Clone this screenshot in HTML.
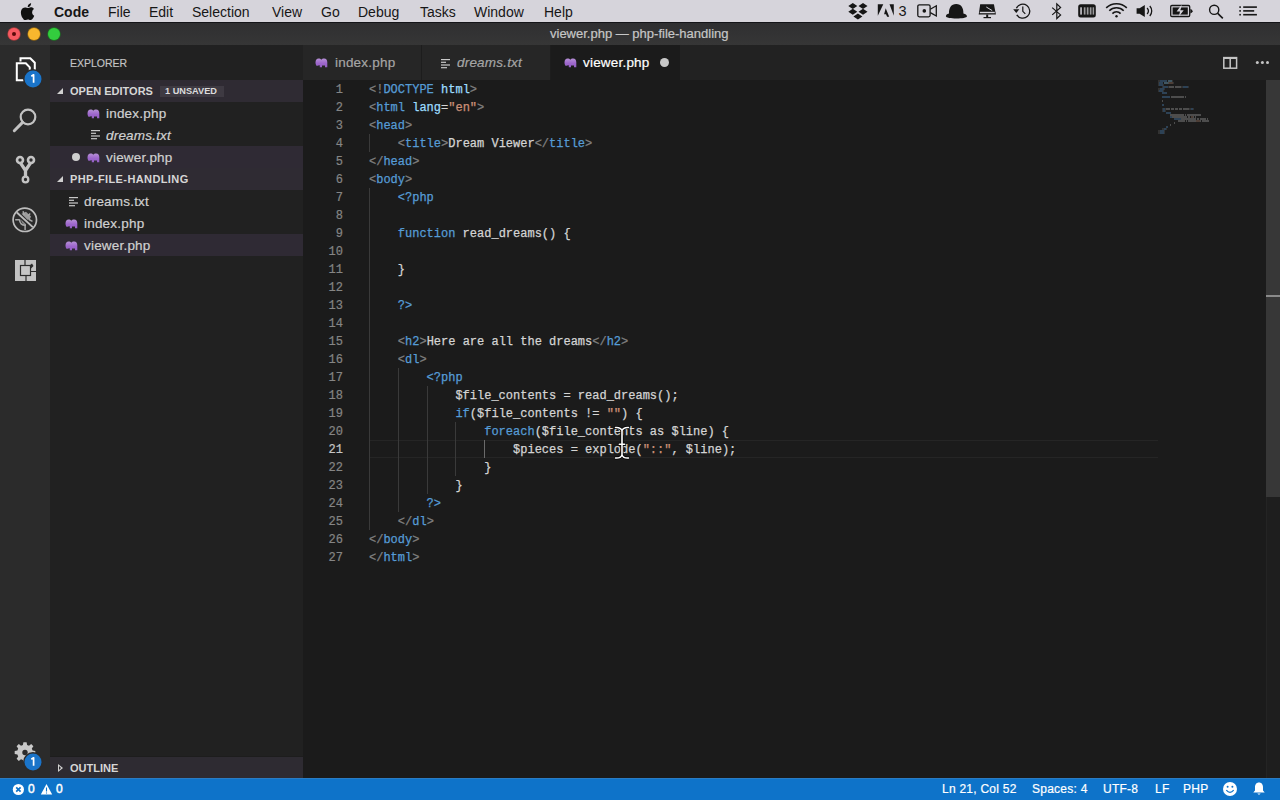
<!DOCTYPE html>
<html><head><meta charset="utf-8">
<style>
*{margin:0;padding:0;box-sizing:border-box}
html,body{width:1280px;height:800px;overflow:hidden;background:#1b1b1b;font-family:"Liberation Sans",sans-serif;position:relative}
.abs{position:absolute}
#menubar{left:0;top:0;width:1280px;height:23px;background:#d6d4db;border-bottom:1px solid #141418}
.m{position:absolute;top:4px;font-size:14px;line-height:16px;color:#161616;white-space:nowrap}
#titlebar{left:0;top:23px;width:1280px;height:22px;background:linear-gradient(#2f2f31,#363636)}
#titlebar .t{-webkit-text-stroke:0.2px;position:absolute;left:550px;top:3px;font-size:13px;line-height:15px;color:#c6c6c6;white-space:nowrap}
.light{position:absolute;top:28px;width:12px;height:12px;border-radius:50%}
#activity{left:0;top:45px;width:50px;height:733px;background:#2b2b2b}
#sidebar{left:50px;top:45px;width:253px;height:733px;background:#212121}
.sbt{-webkit-text-stroke:0.15px;position:absolute;white-space:nowrap;color:#cccccc}
.hdr{position:absolute;left:50px;width:253px;height:22px;background:#2f2b33}
.hdr .tw{position:absolute;left:7px;top:8px;width:0;height:0;border-left:6px solid transparent;border-bottom:6px solid #d0d0d0}
.hdr .tx{position:absolute;left:20px;top:5px;font-size:11px;line-height:13px;font-weight:bold;color:#d6d6d6;white-space:nowrap}
.row{position:absolute;left:50px;width:253px;height:22px}
.row .tx{-webkit-text-stroke:0.2px;position:absolute;top:4px;font-size:13.5px;line-height:15px;letter-spacing:0.2px;color:#d0d0d0;white-space:nowrap}
.sel{background:#2f2a34}
#tabs{left:303px;top:45px;width:977px;height:35px;background:#222222}
.tab{position:absolute;top:45px;height:35px;background:#262626;border-right:1px solid #1d1d1d}
.tab .tx{-webkit-text-stroke:0.2px;position:absolute;top:10px;font-size:13.5px;line-height:15px;letter-spacing:0.2px;color:#a5a5a5;white-space:nowrap}
#editor{left:303px;top:80px;width:977px;height:698px;background:#1b1b1b}
#status{left:0;top:778px;width:1280px;height:22px;background:#0e73c9;border-top:1px solid #2a7cc4}
.st{-webkit-text-stroke:0.2px;position:absolute;top:782px;font-size:12px;line-height:14px;letter-spacing:0.25px;color:#ffffff;white-space:nowrap}
.cl{position:absolute;left:369px;margin-top:1px;-webkit-text-stroke:0.25px;font-family:"Liberation Mono",monospace;font-size:12px;line-height:18px;height:18px;white-space:pre;color:#d4d4d4}
.nm{-webkit-text-stroke:0.2px;position:absolute;left:303px;margin-top:1px;width:40px;font-family:"Liberation Mono",monospace;font-size:12px;line-height:18px;white-space:pre;color:#858585;text-align:right}
.nm.cur{color:#c6c6c6}
.g{color:#808080}.b{color:#569cd6}.lb{color:#9cdcfe}.s{color:#ce9178}
.ig{position:absolute;width:1px;background:#3a3a3a}
.ig.act{background:#6a6a6a}
#curline{left:369px;top:440px;width:789px;height:18px;border-top:1px solid #252525;border-bottom:1px solid #252525}
#scroll{left:1266px;top:80px;width:14px;height:698px;background:#1e1e1e;border-left:1px solid #242424}
#slider{left:1266px;top:80px;width:14px;height:417px;background:#373737}
</style></head>
<body>
<div id="menubar" class="abs">
  <svg class="abs" style="left:20px;top:3px" width="15" height="17" viewBox="0 0 15 17"><path fill="#111" d="M12.2 9.1c0-2.1 1.7-3.1 1.8-3.2-1-1.4-2.5-1.6-3-1.6-1.3-.1-2.5.8-3.2.8-.7 0-1.7-.8-2.8-.7C3.6 4.400 2.3 5.2 1.600 6.500c-1.500 2.600-.4 6.400 1 8.500.7 1 1.500 2.200 2.600 2.100 1-.0 1.500-.7 2.700-.7 1.200 0 1.600.7 2.700.6 1.100 0 1.800-1 2.500-2 .8-1.100 1.100-2.200 1.100-2.300 0 0-2.100-.8-2.100-3.200zM10.200 3c.6-.7 1-1.700.9-2.700-.8 0-1.900.6-2.500 1.300-.5.600-1 1.600-.9 2.600.9.100 1.900-.5 2.500-1.200z"/></svg>
  <div class="m" style="left:54px;font-weight:bold">Code</div>
  <div class="m" style="left:108px">File</div>
  <div class="m" style="left:149px">Edit</div>
  <div class="m" style="left:192px">Selection</div>
  <div class="m" style="left:272px">View</div>
  <div class="m" style="left:321px">Go</div>
  <div class="m" style="left:358px">Debug</div>
  <div class="m" style="left:420px">Tasks</div>
  <div class="m" style="left:474px">Window</div>
  <div class="m" style="left:544px">Help</div>
  <svg style="position:absolute;left:0;top:0" width="1280" height="22" viewBox="0 0 1280 22">
 <g fill="#161616">
  <!-- dropbox -->
  <path d="M852.800 2.900L857.300 5.900L852.800 8.900L848.300 5.900Z M863 2.900L867.500 5.900L863 8.900L858.500 5.900Z M852.800 8.700L857.300 11.700L852.800 14.700L848.300 11.700Z M863 8.700L867.500 11.700L863 14.700L858.500 11.700Z M857.900 13.400L862.400 16.400L857.900 19.400L853.400 16.400Z"/>
  <!-- adobe -->
  <path d="M877.800 4.300H883.300L877.800 15.800Z M889.500 4.300H893.800V15.800Z M885.700 8.200L889.200 16.800H887.100L886 14.200H884.100Z"/>
  <text x="898.500" y="16.200" font-family="Liberation Sans" font-size="14.500">3</text>
  <!-- camera -->
  <rect x="917.800" y="4.800" width="12.300" height="12" rx="1.500" fill="none" stroke="#161616" stroke-width="1.300"/>
  <circle cx="924.300" cy="10.900" r="1.800"/>
  <path d="M930.300 9.200L936.300 5.800V16L930.300 12.600" fill="none" stroke="#161616" stroke-width="1.300"/>
  <!-- hat -->
  <path d="M949 13.500C948.800 8 951 3.900 956.200 3.900C961.400 3.900 963.600 8 963.400 13.500C965.500 14 967 15 967 16.300C967 17.800 962 18.500 956.500 18.500C951 18.500 945.900 17.800 945.900 16.300C945.900 15 947 14 949 13.500Z"/>
  <!-- display -->
  <path d="M980.200 4.300H993.900L995.900 14.500H978.700Z"/>
  <rect x="979.800" y="11.800" width="15" height="1.400" fill="#d6d4db"/>
  <path d="M986.300 7L992.200 10.600" stroke="#d6d4db" stroke-width="1"/>
  <rect x="986.200" y="14.500" width="2" height="3"/>
  <rect x="983.500" y="17" width="7.500" height="1.200"/>
  <!-- time machine -->
  <path d="M1016.400 8.300A7 7 0 1 1 1016.800 14.800" fill="none" stroke="#161616" stroke-width="1.300"/>
  <path d="M1013.200 9.200L1016.300 13L1019.300 9.200Z"/>
  <path d="M1022.800 6.600V11.300L1025.300 13.800" fill="none" stroke="#161616" stroke-width="1.200"/>
  <!-- bluetooth -->
  <path d="M1052.200 7.600L1060.600 14.900L1056.800 18.500V3.900L1060.600 7.500L1052.200 14.900" fill="none" stroke="#161616" stroke-width="1.200"/>
  <!-- memory -->
  <rect x="1078.200" y="4.300" width="17.600" height="13.300" rx="2.500"/>
  <rect x="1080.300" y="7.300" width="1.500" height="7.300" fill="#d6d4db"/>
  <rect x="1083.800" y="7.300" width="1.700" height="7.300" fill="#9a9a9c"/>
  <rect x="1086.800" y="7.300" width="1.700" height="7.300" fill="#9a9a9c"/>
  <rect x="1089.800" y="7.300" width="1.700" height="7.300" fill="#9a9a9c"/>
  <rect x="1092.600" y="7.300" width="1.500" height="7.300" fill="#9a9a9c"/>
  <!-- wifi -->
  <path d="M1106.200 7.800A15 15 0 0 1 1126.800 7.800 M1109.300 10.800A10 10 0 0 1 1123.700 10.800 M1112.400 13.600A5.500 5.500 0 0 1 1120.600 13.600" fill="none" stroke="#161616" stroke-width="1.600"/>
  <circle cx="1116.500" cy="16.300" r="1.200"/>
  <!-- volume -->
  <path d="M1136.600 8.200H1139.600L1144.800 5V17L1139.600 13.800H1136.600Z"/>
  <path d="M1147.100 8A4.500 4.500 0 0 1 1147.100 14 M1149.800 6A7.500 7.500 0 0 1 1149.800 16" fill="none" stroke="#161616" stroke-width="1.300"/>
  <!-- battery -->
  <rect x="1170.700" y="5.500" width="19" height="11" rx="1.200" fill="none" stroke="#161616" stroke-width="1.300"/>
  <rect x="1172.600" y="7.400" width="15.200" height="7.200"/>
  <path d="M1190.300 9V13.400Q1192.600 12.800 1192.600 11.200Q1192.600 9.600 1190.300 9Z"/>
  <path d="M1181 5.600L1176.600 11.600H1180L1178.900 16.600L1183.700 10.300H1180.300L1181.800 5.600Z" fill="#d6d4db"/>
  <!-- search -->
  <circle cx="1214.200" cy="9.800" r="4.600" fill="none" stroke="#161616" stroke-width="1.400"/>
  <path d="M1217.500 13.200L1222.800 18.300" stroke="#161616" stroke-width="1.600"/>
  <!-- list -->
  <rect x="1239.300" y="6.300" width="1.600" height="1.600"/><rect x="1239.300" y="10.100" width="1.600" height="1.600"/><rect x="1239.300" y="13.900" width="1.600" height="1.600"/>
  <rect x="1243.200" y="6.300" width="13.700" height="1.600"/><rect x="1243.200" y="10.100" width="11" height="1.600"/><rect x="1243.200" y="13.900" width="13.700" height="1.600"/>
 </g>
</svg>

</div>
<div id="titlebar" class="abs"><div class="t">viewer.php — php-file-handling</div></div>
<div class="light" style="left:8px;background:#f65a61;box-shadow:0 0 0 0.7px #a83c3c"><div style="position:absolute;left:4px;top:4px;width:4px;height:4px;border-radius:50%;background:#5a0a0a"></div></div>
<div class="light" style="left:28px;background:#f8b72e;box-shadow:0 0 0 0.7px #9a6a10"></div>
<div class="light" style="left:48px;background:#33cc3e;box-shadow:0 0 0 0.7px #1a7a20"></div>

<div id="activity" class="abs"></div>
<div id="sidebar" class="abs"></div>
<div class="sbt" style="left:70px;top:57px;font-size:10.5px;line-height:12px;color:#c4c4c4">EXPLORER</div>
<div class="hdr" style="top:80px"><div class="tw"></div><div class="tx">OPEN EDITORS</div>
  <div style="position:absolute;left:110px;top:6px;width:64px;height:11px;background:#3e3a42"></div>
  <div style="position:absolute;left:115px;top:6px;font-size:9.2px;line-height:11px;font-weight:bold;color:#dcdcdc;white-space:nowrap">1 UNSAVED</div>
</div>
<div class="row" style="top:102px"><div class="tx" style="left:56px">index.php</div></div>
<div class="row" style="top:124px"><div class="tx" style="left:56px;font-style:italic">dreams.txt</div></div>
<div class="row sel" style="top:146px"><div style="position:absolute;left:22px;top:7px;width:8px;height:8px;border-radius:50%;background:#cfcfcf"></div><div class="tx" style="left:56px">viewer.php</div></div>
<div class="hdr" style="top:168px"><div class="tw"></div><div class="tx" style="letter-spacing:0.4px">PHP-FILE-HANDLING</div></div>
<div class="row" style="top:190px"><div class="tx" style="left:34px">dreams.txt</div></div>
<div class="row" style="top:212px"><div class="tx" style="left:34px">index.php</div></div>
<div class="row sel" style="top:234px"><div class="tx" style="left:34px">viewer.php</div></div>
<div class="hdr" style="top:756px;background:#2e2b32;border-top:1px solid #1d1d1d"><div style="position:absolute;left:8px;top:7px;width:0;height:0;border-top:4px solid transparent;border-bottom:4px solid transparent;border-left:5px solid #d0d0d0"></div><div style="position:absolute;left:9px;top:9px;width:0;height:0;border-top:2px solid transparent;border-bottom:2px solid transparent;border-left:2.5px solid #2e2b32"></div><div class="tx">OUTLINE</div></div>

<div id="tabs" class="abs"></div>
<div class="tab" style="left:303px;width:119px"><div class="tx" style="left:32px">index.php</div></div>
<div class="tab" style="left:422px;width:129px"><div class="tx" style="left:35px;font-style:italic">dreams.txt</div></div>
<div class="tab" style="left:551px;width:129px;background:#1b1b1b;border-right:none"><div class="tx" style="left:32px;color:#ffffff">viewer.php</div>
  <div style="position:absolute;left:109px;top:13px;width:9px;height:9px;border-radius:50%;background:#c8c8c8"></div></div>

<div id="editor" class="abs"></div>
<div id="curline" class="abs"></div>
<div class="nm" style="top:80px">1</div>
<div class="nm" style="top:98px">2</div>
<div class="nm" style="top:116px">3</div>
<div class="nm" style="top:134px">4</div>
<div class="nm" style="top:152px">5</div>
<div class="nm" style="top:170px">6</div>
<div class="nm" style="top:188px">7</div>
<div class="nm" style="top:206px">8</div>
<div class="nm" style="top:224px">9</div>
<div class="nm" style="top:242px">10</div>
<div class="nm" style="top:260px">11</div>
<div class="nm" style="top:278px">12</div>
<div class="nm" style="top:296px">13</div>
<div class="nm" style="top:314px">14</div>
<div class="nm" style="top:332px">15</div>
<div class="nm" style="top:350px">16</div>
<div class="nm" style="top:368px">17</div>
<div class="nm" style="top:386px">18</div>
<div class="nm" style="top:404px">19</div>
<div class="nm" style="top:422px">20</div>
<div class="nm cur" style="top:440px">21</div>
<div class="nm" style="top:458px">22</div>
<div class="nm" style="top:476px">23</div>
<div class="nm" style="top:494px">24</div>
<div class="nm" style="top:512px">25</div>
<div class="nm" style="top:530px">26</div>
<div class="nm" style="top:548px">27</div>
<div class="ig" style="left:369.0px;top:134px;height:18px"></div>
<div class="ig" style="left:369.0px;top:188px;height:342px"></div>
<div class="ig" style="left:397.8px;top:368px;height:144px"></div>
<div class="ig" style="left:426.6px;top:386px;height:108px"></div>
<div class="ig" style="left:455.4px;top:422px;height:54px"></div>
<div class="ig act" style="left:484.2px;top:440px;height:18px"></div>
<div class="cl" style="top:80px"><span class="g">&lt;!</span><span class="b">DOCTYPE</span> <span class="lb">html</span><span class="g">&gt;</span></div>
<div class="cl" style="top:98px"><span class="g">&lt;</span><span class="b">html</span> <span class="lb">lang</span>=<span class="s">&quot;en&quot;</span><span class="g">&gt;</span></div>
<div class="cl" style="top:116px"><span class="g">&lt;</span><span class="b">head</span><span class="g">&gt;</span></div>
<div class="cl" style="top:134px">    <span class="g">&lt;</span><span class="b">title</span><span class="g">&gt;</span>Dream Viewer<span class="g">&lt;/</span><span class="b">title</span><span class="g">&gt;</span></div>
<div class="cl" style="top:152px"><span class="g">&lt;/</span><span class="b">head</span><span class="g">&gt;</span></div>
<div class="cl" style="top:170px"><span class="g">&lt;</span><span class="b">body</span><span class="g">&gt;</span></div>
<div class="cl" style="top:188px">    <span class="b">&lt;?php</span></div>
<div class="cl" style="top:206px"></div>
<div class="cl" style="top:224px">    <span class="b">function</span> read_dreams() {</div>
<div class="cl" style="top:242px"></div>
<div class="cl" style="top:260px">    }</div>
<div class="cl" style="top:278px"></div>
<div class="cl" style="top:296px">    <span class="b">?&gt;</span></div>
<div class="cl" style="top:314px"></div>
<div class="cl" style="top:332px">    <span class="g">&lt;</span><span class="b">h2</span><span class="g">&gt;</span>Here are all the dreams<span class="g">&lt;/</span><span class="b">h2</span><span class="g">&gt;</span></div>
<div class="cl" style="top:350px">    <span class="g">&lt;</span><span class="b">dl</span><span class="g">&gt;</span></div>
<div class="cl" style="top:368px">        <span class="b">&lt;?php</span></div>
<div class="cl" style="top:386px">            $file_contents = read_dreams();</div>
<div class="cl" style="top:404px">            <span class="b">if</span>($file_contents != <span class="s">&quot;&quot;</span>) {</div>
<div class="cl" style="top:422px">                <span class="b">foreach</span>($file_contents as $line) {</div>
<div class="cl" style="top:440px">                    $pieces = explode(<span class="s">&quot;::&quot;</span>, $line);</div>
<div class="cl" style="top:458px">                }</div>
<div class="cl" style="top:476px">            }</div>
<div class="cl" style="top:494px">        <span class="b">?&gt;</span></div>
<div class="cl" style="top:512px">    <span class="g">&lt;/</span><span class="b">dl</span><span class="g">&gt;</span></div>
<div class="cl" style="top:530px"><span class="g">&lt;/</span><span class="b">body</span><span class="g">&gt;</span></div>
<div class="cl" style="top:548px"><span class="g">&lt;/</span><span class="b">html</span><span class="g">&gt;</span></div>
<svg class="abs" style="left:0;top:0" width="1280" height="800"><g opacity="0.75"><rect x="1158" y="80" width="2" height="2" fill="#3a3a3a"/><rect x="1160" y="80" width="7" height="2" fill="#33506a"/><rect x="1168" y="80" width="4" height="2" fill="#4d6b7a"/><rect x="1172" y="80" width="1" height="2" fill="#3a3a3a"/><rect x="1158" y="82" width="1" height="2" fill="#3a3a3a"/><rect x="1159" y="82" width="4" height="2" fill="#33506a"/><rect x="1164" y="82" width="4" height="2" fill="#4d6b7a"/><rect x="1168" y="82" width="1" height="2" fill="#5e5e5e"/><rect x="1169" y="82" width="4" height="2" fill="#5e4a40"/><rect x="1173" y="82" width="1" height="2" fill="#3a3a3a"/><rect x="1158" y="84" width="1" height="2" fill="#3a3a3a"/><rect x="1159" y="84" width="4" height="2" fill="#33506a"/><rect x="1163" y="84" width="1" height="2" fill="#3a3a3a"/><rect x="1162" y="86" width="1" height="2" fill="#3a3a3a"/><rect x="1163" y="86" width="5" height="2" fill="#33506a"/><rect x="1168" y="86" width="1" height="2" fill="#3a3a3a"/><rect x="1169" y="86" width="5" height="2" fill="#5e5e5e"/><rect x="1175" y="86" width="6" height="2" fill="#5e5e5e"/><rect x="1181" y="86" width="2" height="2" fill="#3a3a3a"/><rect x="1183" y="86" width="5" height="2" fill="#33506a"/><rect x="1188" y="86" width="1" height="2" fill="#3a3a3a"/><rect x="1158" y="88" width="2" height="2" fill="#3a3a3a"/><rect x="1160" y="88" width="4" height="2" fill="#33506a"/><rect x="1164" y="88" width="1" height="2" fill="#3a3a3a"/><rect x="1158" y="90" width="1" height="2" fill="#3a3a3a"/><rect x="1159" y="90" width="4" height="2" fill="#33506a"/><rect x="1163" y="90" width="1" height="2" fill="#3a3a3a"/><rect x="1162" y="92" width="5" height="2" fill="#33506a"/><rect x="1162" y="96" width="8" height="2" fill="#33506a"/><rect x="1171" y="96" width="13" height="2" fill="#5e5e5e"/><rect x="1185" y="96" width="1" height="2" fill="#5e5e5e"/><rect x="1162" y="100" width="1" height="2" fill="#5e5e5e"/><rect x="1162" y="104" width="2" height="2" fill="#33506a"/><rect x="1162" y="108" width="1" height="2" fill="#3a3a3a"/><rect x="1163" y="108" width="2" height="2" fill="#33506a"/><rect x="1165" y="108" width="1" height="2" fill="#3a3a3a"/><rect x="1166" y="108" width="4" height="2" fill="#5e5e5e"/><rect x="1171" y="108" width="3" height="2" fill="#5e5e5e"/><rect x="1175" y="108" width="3" height="2" fill="#5e5e5e"/><rect x="1179" y="108" width="3" height="2" fill="#5e5e5e"/><rect x="1183" y="108" width="6" height="2" fill="#5e5e5e"/><rect x="1189" y="108" width="2" height="2" fill="#3a3a3a"/><rect x="1191" y="108" width="2" height="2" fill="#33506a"/><rect x="1193" y="108" width="1" height="2" fill="#3a3a3a"/><rect x="1162" y="110" width="1" height="2" fill="#3a3a3a"/><rect x="1163" y="110" width="2" height="2" fill="#33506a"/><rect x="1165" y="110" width="1" height="2" fill="#3a3a3a"/><rect x="1166" y="112" width="5" height="2" fill="#33506a"/><rect x="1170" y="114" width="14" height="2" fill="#5e5e5e"/><rect x="1185" y="114" width="1" height="2" fill="#5e5e5e"/><rect x="1187" y="114" width="14" height="2" fill="#5e5e5e"/><rect x="1170" y="116" width="2" height="2" fill="#33506a"/><rect x="1172" y="116" width="15" height="2" fill="#5e5e5e"/><rect x="1188" y="116" width="2" height="2" fill="#5e5e5e"/><rect x="1191" y="116" width="2" height="2" fill="#5e4a40"/><rect x="1193" y="116" width="1" height="2" fill="#5e5e5e"/><rect x="1195" y="116" width="1" height="2" fill="#5e5e5e"/><rect x="1174" y="118" width="7" height="2" fill="#33506a"/><rect x="1181" y="118" width="15" height="2" fill="#5e5e5e"/><rect x="1197" y="118" width="2" height="2" fill="#5e5e5e"/><rect x="1200" y="118" width="6" height="2" fill="#5e5e5e"/><rect x="1207" y="118" width="1" height="2" fill="#5e5e5e"/><rect x="1178" y="120" width="7" height="2" fill="#5e5e5e"/><rect x="1186" y="120" width="1" height="2" fill="#5e5e5e"/><rect x="1188" y="120" width="8" height="2" fill="#5e5e5e"/><rect x="1196" y="120" width="4" height="2" fill="#5e4a40"/><rect x="1200" y="120" width="1" height="2" fill="#5e5e5e"/><rect x="1202" y="120" width="7" height="2" fill="#5e5e5e"/><rect x="1174" y="122" width="1" height="2" fill="#5e5e5e"/><rect x="1170" y="124" width="1" height="2" fill="#5e5e5e"/><rect x="1166" y="126" width="2" height="2" fill="#33506a"/><rect x="1162" y="128" width="2" height="2" fill="#3a3a3a"/><rect x="1164" y="128" width="2" height="2" fill="#33506a"/><rect x="1166" y="128" width="1" height="2" fill="#3a3a3a"/><rect x="1158" y="130" width="2" height="2" fill="#3a3a3a"/><rect x="1160" y="130" width="4" height="2" fill="#33506a"/><rect x="1164" y="130" width="1" height="2" fill="#3a3a3a"/><rect x="1158" y="132" width="2" height="2" fill="#3a3a3a"/><rect x="1160" y="132" width="4" height="2" fill="#33506a"/><rect x="1164" y="132" width="1" height="2" fill="#3a3a3a"/></g></svg>
<div id="scroll" class="abs"></div>
<div id="slider" class="abs"></div>
<div class="abs" style="left:1266px;top:295px;width:14px;height:2px;background:#8a8a8a"></div>

<div id="status" class="abs"></div>
<div class="st" style="left:942px">Ln 21, Col 52</div>
<div class="st" style="left:1032px">Spaces: 4</div>
<div class="st" style="left:1103px">UTF-8</div>
<div class="st" style="left:1155px">LF</div>
<div class="st" style="left:1183px">PHP</div>
<div class="st" style="left:28px;-webkit-text-stroke:0.45px">0</div>
<div class="st" style="left:56px;-webkit-text-stroke:0.45px">0</div>
<div style="position:absolute;left:0;top:0"><svg style="position:absolute;left:87px;top:109px" width="13" height="10" viewBox="0 0 13 10"><defs><linearGradient id="eg" x1="0" y1="0" x2="0" y2="1"><stop offset="0" stop-color="#b690d6"/><stop offset="0.55" stop-color="#9d66cc"/><stop offset="1" stop-color="#9460c4"/></linearGradient></defs><path fill="url(#eg)" d="M0.500 4.500C0.500 2 1.800 0.500 3.500 0.500C4.800 0.500 5.800 1 6.300 1.800C6.800 1 7.800 0.500 9.200 0.500C11.200 0.500 12.300 2 12.300 4.200V9.200H10V7.500H7V9.200H4.800V7.200C3.500 7.200 2.500 7.600 1.800 8C1 7.300 0.500 6 0.500 4.500Z"/></svg><svg style="position:absolute;left:91px;top:130px" width="10" height="10" viewBox="0 0 10 10"><rect x="0" y="0" width="9" height="1.2" fill="#c8c8c8"/><rect x="0" y="2.7" width="5" height="1.2" fill="#c8c8c8"/><rect x="0" y="5.4" width="9" height="1.2" fill="#c8c8c8"/><rect x="0" y="8.1" width="6" height="1.2" fill="#c8c8c8"/></svg><svg style="position:absolute;left:87px;top:153px" width="13" height="10" viewBox="0 0 13 10"><defs><linearGradient id="eg" x1="0" y1="0" x2="0" y2="1"><stop offset="0" stop-color="#b690d6"/><stop offset="0.55" stop-color="#9d66cc"/><stop offset="1" stop-color="#9460c4"/></linearGradient></defs><path fill="url(#eg)" d="M0.500 4.500C0.500 2 1.800 0.500 3.500 0.500C4.800 0.500 5.800 1 6.300 1.800C6.800 1 7.800 0.500 9.200 0.500C11.200 0.500 12.300 2 12.300 4.200V9.200H10V7.500H7V9.200H4.800V7.200C3.500 7.200 2.500 7.600 1.800 8C1 7.300 0.500 6 0.500 4.500Z"/></svg><svg style="position:absolute;left:69px;top:197px" width="10" height="10" viewBox="0 0 10 10"><rect x="0" y="0" width="9" height="1.2" fill="#c8c8c8"/><rect x="0" y="2.7" width="5" height="1.2" fill="#c8c8c8"/><rect x="0" y="5.4" width="9" height="1.2" fill="#c8c8c8"/><rect x="0" y="8.1" width="6" height="1.2" fill="#c8c8c8"/></svg><svg style="position:absolute;left:65px;top:219px" width="13" height="10" viewBox="0 0 13 10"><defs><linearGradient id="eg" x1="0" y1="0" x2="0" y2="1"><stop offset="0" stop-color="#b690d6"/><stop offset="0.55" stop-color="#9d66cc"/><stop offset="1" stop-color="#9460c4"/></linearGradient></defs><path fill="url(#eg)" d="M0.500 4.500C0.500 2 1.800 0.500 3.500 0.500C4.800 0.500 5.800 1 6.300 1.800C6.800 1 7.800 0.500 9.200 0.500C11.200 0.500 12.300 2 12.300 4.200V9.200H10V7.500H7V9.200H4.800V7.200C3.500 7.200 2.500 7.600 1.800 8C1 7.300 0.500 6 0.500 4.500Z"/></svg><svg style="position:absolute;left:65px;top:241px" width="13" height="10" viewBox="0 0 13 10"><defs><linearGradient id="eg" x1="0" y1="0" x2="0" y2="1"><stop offset="0" stop-color="#b690d6"/><stop offset="0.55" stop-color="#9d66cc"/><stop offset="1" stop-color="#9460c4"/></linearGradient></defs><path fill="url(#eg)" d="M0.500 4.500C0.500 2 1.800 0.500 3.500 0.500C4.800 0.500 5.800 1 6.300 1.800C6.800 1 7.800 0.500 9.200 0.500C11.200 0.500 12.300 2 12.300 4.200V9.200H10V7.500H7V9.200H4.800V7.200C3.500 7.200 2.500 7.600 1.800 8C1 7.300 0.500 6 0.500 4.500Z"/></svg><svg style="position:absolute;left:315px;top:58px" width="13" height="10" viewBox="0 0 13 10"><defs><linearGradient id="eg" x1="0" y1="0" x2="0" y2="1"><stop offset="0" stop-color="#b690d6"/><stop offset="0.55" stop-color="#9d66cc"/><stop offset="1" stop-color="#9460c4"/></linearGradient></defs><path fill="url(#eg)" d="M0.500 4.500C0.500 2 1.800 0.500 3.500 0.500C4.800 0.500 5.800 1 6.300 1.800C6.800 1 7.800 0.500 9.200 0.500C11.200 0.500 12.300 2 12.300 4.200V9.200H10V7.500H7V9.200H4.800V7.200C3.500 7.200 2.500 7.600 1.800 8C1 7.300 0.500 6 0.500 4.500Z"/></svg><svg style="position:absolute;left:441px;top:59px" width="10" height="10" viewBox="0 0 10 10"><rect x="0" y="0" width="9" height="1.2" fill="#c8c8c8"/><rect x="0" y="2.7" width="5" height="1.2" fill="#c8c8c8"/><rect x="0" y="5.4" width="9" height="1.2" fill="#c8c8c8"/><rect x="0" y="8.1" width="6" height="1.2" fill="#c8c8c8"/></svg><svg style="position:absolute;left:564px;top:58px" width="13" height="10" viewBox="0 0 13 10"><defs><linearGradient id="eg" x1="0" y1="0" x2="0" y2="1"><stop offset="0" stop-color="#b690d6"/><stop offset="0.55" stop-color="#9d66cc"/><stop offset="1" stop-color="#9460c4"/></linearGradient></defs><path fill="url(#eg)" d="M0.500 4.500C0.500 2 1.800 0.500 3.500 0.500C4.800 0.500 5.800 1 6.300 1.800C6.800 1 7.800 0.500 9.200 0.500C11.200 0.500 12.300 2 12.300 4.200V9.200H10V7.500H7V9.200H4.800V7.200C3.500 7.200 2.500 7.600 1.800 8C1 7.300 0.500 6 0.500 4.500Z"/></svg></div><svg class="abs" style="left:0;top:0;position:absolute" width="50" height="800" viewBox="0 0 50 800">
 <!-- files -->
 <path d="M20.5 61.5V58.2H30.3L34.8 62.7V73.2H30.8" fill="none" stroke="#ffffff" stroke-width="2"/>
 <path d="M16.8 63.3H25.8L29.8 67.3V80.3H16.8Z" fill="#2b2b2b" stroke="#ffffff" stroke-width="2"/>
 <circle cx="33" cy="79" r="10" fill="#2b2b2b"/>
 <circle cx="33" cy="79" r="8.5" fill="#1a74c9"/>
 <path d="M31.300 76.300L33.600 74.800V82.800" fill="none" stroke="#fff" stroke-width="1.700" stroke-linejoin="round"/>
 <!-- search -->
 <circle cx="28" cy="117" r="7.3" fill="none" stroke="#c2c2c2" stroke-width="2.2"/>
 <path d="M22.6 122.4L14.3 130.7" stroke="#c2c2c2" stroke-width="3" stroke-linecap="round"/>
 <!-- scm -->
 <circle cx="20" cy="160" r="3" fill="none" stroke="#c4c4c4" stroke-width="2.6"/>
 <circle cx="31" cy="160" r="3" fill="none" stroke="#c4c4c4" stroke-width="2.6"/>
 <circle cx="25.5" cy="179.5" r="2.8" fill="none" stroke="#c4c4c4" stroke-width="2.3"/>
 <path d="M20.6 163.2L25.5 170.5L30.4 163.2M25.5 170V176.5" fill="none" stroke="#c4c4c4" stroke-width="3.3" stroke-linejoin="round"/>
 <!-- debug -->
 <circle cx="24.8" cy="219.8" r="11.7" fill="none" stroke="#bdbdbd" stroke-width="1.7"/>
 <path d="M16.9 212.5L32.8 227.1" stroke="#bdbdbd" stroke-width="1.9"/>
 <path d="M23 211.2L24.300 215.300M30.200 213.500L27.800 216M32.500 221.300L29 219.500" stroke="#a9a9a9" stroke-width="1.5"/>
 <path d="M21.500 213.800L26 211.800L31 216.500L29.600 219.800L27.400 219.700Z" fill="#a9a9a9" opacity="0.9"/>
 <path d="M15.200 219.700H19.500M25.100 224V230" stroke="#a9a9a9" stroke-width="1.5"/>
 <path d="M19.500 219.200Q19.800 225.500 25.800 225.200" fill="none" stroke="#a9a9a9" stroke-width="1.6"/>
 <path d="M21 219.500L26 224.200Q22 225 21 219.500Z" fill="#8a8a8a"/>
 <!-- extensions -->
 <rect x="15" y="260" width="21" height="21" fill="#c2c2c2"/>
 <path d="M25 260V266M26 275V281M30.5 271.5H36" stroke="#2b2b2b" stroke-width="1.2"/>
 <rect x="20.5" y="265.5" width="10" height="10" fill="#c6c6c6" stroke="#2b2b2b" stroke-width="1.2"/>
 <path d="M29.5 265.5L32 263.5L33.5 266L31 268.5Z" fill="#2b2b2b"/>
 <!-- gear -->
 <g transform="translate(25 752.5)">
  <path fill="#c9c9c9" d="M-1.6 -9.3H1.6L2.1 -6.6L4 -5.8L6.2 -7.400L8.400 -5.200L6.800 -3L7.600 -1.100L10.300 -.6V2.600L7.600 3.100L6.800 5L8.400 7.200L6.200 9.400L4 7.800L2.100 8.600L1.600 11.300H-1.600L-2.100 8.600L-4 7.800L-6.200 9.400L-8.400 7.200L-6.800 5L-7.600 3.100L-10.300 2.600V-.6L-7.600 -1.100L-6.800 -3L-8.400 -5.200L-6.200 -7.400L-4 -5.800L-2.100 -6.600Z" transform="translate(0 -1)"/>
  <circle cx="0" cy="0" r="2.7" fill="#2b2b2b"/>
 </g>
 <circle cx="33" cy="762" r="10" fill="#2b2b2b"/>
 <circle cx="33" cy="762" r="8.5" fill="#1a74c9"/>
 <path d="M31.300 759.300L33.600 757.800V765.800" fill="none" stroke="#fff" stroke-width="1.700" stroke-linejoin="round"/>
</svg>
<!-- status icons -->
<svg class="abs" style="left:0;top:778px;position:absolute" width="1280" height="22" viewBox="0 778 1280 22">
 <circle cx="18.4" cy="789.5" r="5.6" fill="#fff"/>
 <path d="M16.200 787.300L20.600 791.700M20.600 787.300L16.200 791.700" stroke="#0e73c9" stroke-width="1.7"/>
 <path d="M46.5 784L52.2 794.6H40.8Z" fill="#fff"/>
 <path d="M46.5 787.5V791.5M46.5 792.6V793.6" stroke="#0e73c9" stroke-width="1.1"/>
 <!-- smiley -->
 <circle cx="1230" cy="789" r="7" fill="#fff"/>
 <circle cx="1227.6" cy="786.8" r="1" fill="#0e73c9"/><circle cx="1232.4" cy="786.8" r="1" fill="#0e73c9"/>
 <path d="M1226.300 790.200Q1230 794.500 1233.700 790.200" fill="none" stroke="#0e73c9" stroke-width="1.2"/>
 <!-- bell -->
 <path d="M1259 782.500C1256.200 782.500 1255 784.800 1255 787.200V790.500L1253.300 792.600H1264.700L1263 790.500V787.200C1263 784.800 1261.800 782.500 1259 782.500Z" fill="#fff"/>
 <path d="M1257.300 793.500Q1259 795.800 1260.700 793.500Z" fill="#fff"/>
</svg>
<!-- editor actions -->
<svg class="abs" style="left:1215px;top:50px;position:absolute" width="65" height="25" viewBox="1215 50 65 25">
 <rect x="1223.800" y="57.600" width="12.800" height="10.600" fill="none" stroke="#c5c5c5" stroke-width="1.5"/>
 <rect x="1223.800" y="57" width="12.800" height="2" fill="#c5c5c5"/>
 <path d="M1230.200 58V68" stroke="#c5c5c5" stroke-width="1.5"/>
 <circle cx="1257.300" cy="62.600" r="1.5" fill="#c5c5c5"/><circle cx="1262.400" cy="62.600" r="1.5" fill="#c5c5c5"/><circle cx="1267.500" cy="62.600" r="1.5" fill="#c5c5c5"/>
</svg>
<!-- I-beam cursor -->
<svg class="abs" style="left:610px;top:422px;position:absolute" width="24" height="42" viewBox="610 422 24 42">
 <path d="M615.500 427.500Q620.500 427 622 430.500Q623.500 427 628.500 427.500M622 430.500V455M615.500 458Q620.500 458.500 622 455Q623.500 458.500 628.500 458M619.300 444.200H624.700" fill="none" stroke="#000" stroke-width="3" stroke-linecap="round"/>
 <path d="M615.500 427.500Q620.500 427 622 430.500Q623.500 427 628.500 427.500M622 430.500V455M615.500 458Q620.500 458.500 622 455Q623.500 458.500 628.500 458M619.300 444.200H624.700" fill="none" stroke="#fff" stroke-width="1.6" stroke-linecap="round"/>
</svg>

</body></html>
